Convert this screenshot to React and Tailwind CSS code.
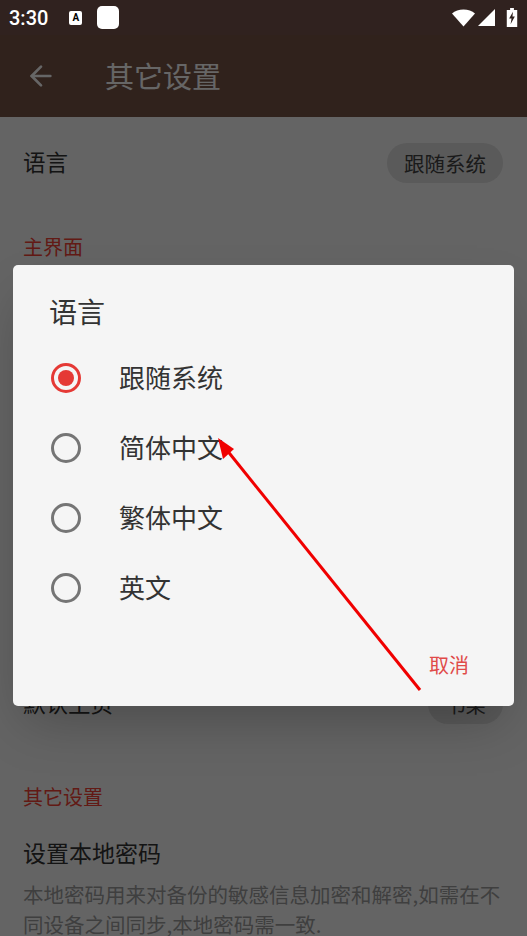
import { ArrowLeft } from 'lucide-react';

const cjk = "font-['Noto_Sans_CJK_SC','Noto_Sans',sans-serif]";

function StatusBar() {
  return (
    <div className="h-[35px] bg-[#30221f] flex items-center pl-[9px] pr-[9px] text-white">
      <span className="font-['Roboto',sans-serif] text-[20px] leading-none font-medium">3:30</span>
      <div className="ml-[21px] w-[13px] h-[14px] bg-white rounded-[2px] flex items-center justify-center">
        <span className="font-['Roboto',sans-serif] text-[10px] leading-none font-bold text-black">A</span>
      </div>
      <div className="ml-[15px] w-[22px] h-[23px] bg-white rounded-[5px]" />
      <div className="ml-auto flex items-center">
        <svg width="23" height="18" viewBox="0 0 23 18" fill="white">
          <path d="M0 4.5C3 1.8 7 0.5 11.5 0.5S20 1.8 23 4.5L11.5 17.5Z" />
        </svg>
        <svg className="ml-[3px]" width="17" height="17" viewBox="0 0 17 17" fill="white">
          <path d="M0 17L17 0V17Z" />
        </svg>
        <svg className="ml-[11px]" width="12" height="19" viewBox="0 0 12 20">
          <path d="M4 0H8V2H11.5V20H0.5V2H4Z" fill="white" />
          <path d="M7 4L3 11H5.5L4.5 17L9 9H6.5Z" fill="#30221f" />
        </svg>
      </div>
    </div>
  );
}

function Chip({ children, className = '' }) {
  return (
    <div className={`h-10 rounded-full bg-[#e0e0e0] flex items-center justify-center text-[20.5px] text-[#424242] ${className}`}>
      {children}
    </div>
  );
}

function Settings() {
  return (
    <div className="h-[901px] bg-[#fafafa] overflow-hidden">
      <div className="h-[82px] bg-[#795548] flex items-center text-white">
        <ArrowLeft className="ml-[25px] w-[32px] h-[32px]" strokeWidth={2} />
        <span className="ml-[48px] -mt-[2px] text-[29px] leading-none">其它设置</span>
      </div>
      <div className="pl-[23px] pr-6">
        <div className="flex items-center justify-between h-10 mt-[26px]">
          <span className="-mt-[3px] text-[22.5px] text-[#333333]">语言</span>
          <Chip className="w-[116px]">跟随系统</Chip>
        </div>
        <div className="mt-[49px] text-[20px] leading-[30px] text-[#f44336]">主界面</div>
        <div className="flex items-center justify-between h-10 mt-[422px]">
          <span className="-mt-[3px] text-[22.5px] text-[#333333]">默认主页</span>
          <Chip className="w-[75px]">书架</Chip>
        </div>
        <div className="mt-[58px] text-[20px] leading-[30px] text-[#f44336]">其它设置</div>
        <div className="mt-[23px] text-[23px] leading-[34px] text-[#333333]">设置本地密码</div>
        <div className="mt-[10px] text-[20.5px] leading-[30px] text-[#9e9e9e]">
          本地密码用来对备份的敏感信息加密和解密,如需在不同设备之间同步,本地密码需一致.
        </div>
      </div>
    </div>
  );
}

function Option({ label, selected }) {
  return (
    <div className="h-[70px] flex items-center pl-[38px]">
      <div className={`w-[30px] h-[30px] rounded-full border-[3px] flex items-center justify-center ${selected ? 'border-[#e53935]' : 'border-[#757575]'}`}>
        {selected && <div className="w-[16px] h-[16px] rounded-full bg-[#e53935]" />}
      </div>
      <span className="ml-[38px] -mt-[2px] text-[26px] leading-none text-[#333333]">{label}</span>
    </div>
  );
}

function LanguageDialog() {
  return (
    <div className="absolute left-[13px] top-[265px] w-[501px] h-[441px] bg-[#f5f5f5] rounded-[5px] shadow-2xl">
      <div className="pl-[36px] pt-[26px] text-[28px] leading-[40px] text-[#333333]">语言</div>
      <div className="mt-[12px]">
        <Option label="跟随系统" selected />
        <Option label="简体中文" />
        <Option label="繁体中文" />
        <Option label="英文" />
      </div>
      <div className="flex justify-end pr-[45px] mt-[27px] text-[20px] leading-[30px] text-[#e04a48]">取消</div>
    </div>
  );
}

export default function App() {
  return (
    <div className={`relative w-[527px] h-[936px] overflow-hidden ${cjk}`}>
      <StatusBar />
      <Settings />
      <div className="absolute inset-x-0 top-[35px] bottom-0 bg-black/60" />
      <LanguageDialog />
      {/* annotation arrow */}
      <svg className="absolute inset-0" width="527" height="936" viewBox="0 0 527 936">
        <line x1="420" y1="690" x2="226" y2="449" stroke="#f00000" strokeWidth="3" />
        <path d="M218 438L234 449L223 459Z" fill="#f00000" />
      </svg>
    </div>
  );
}
